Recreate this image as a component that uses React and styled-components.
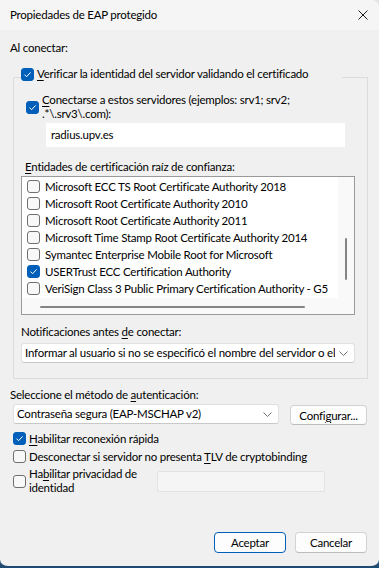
import React from 'react'
import styled, { createGlobalStyle } from 'styled-components'

const GlobalStyle = createGlobalStyle`
  html, body {
    margin: 0;
    padding: 0;
  }
  body {
    background: linear-gradient(#e4e4e4 50%, #1f4b73 50%);
    font-family: Lato, "Noto Sans", sans-serif;
    font-size: 11.5px;
    letter-spacing: -0.22px;
    color: #000;
  }
`

const Window = styled.div`
  width: 379px;
  height: 568px;
  box-sizing: border-box;
  background: #f0f0f0;
  border-radius: 0 8px 8px 8px;
  border-bottom: 2px solid #1f4b73;
  display: flex;
  flex-direction: column;
  overflow: hidden;
`

const TitleBar = styled.div`
  height: 30px;
  flex: none;
  display: flex;
  align-items: center;
  justify-content: space-between;
  padding: 0 11px 0 10px;
  background: #f5f5f5;
  line-height: 16px;
`

const Body = styled.div`
  display: flex;
  flex-direction: column;
  padding: 10px 11px 0 10px;
`

const Label = styled.div`
  line-height: 16px;
  margin-top: ${p => p.$mt || 0}px;
  margin-left: ${p => p.$ml || 0}px;
  white-space: nowrap;
`

const Group = styled.fieldset`
  margin: 10px 0 0 3px;
  padding: 0 12px 15px 7px;
  border: 1px solid #dcdcdc;
  min-width: 0;
  display: flex;
  flex-direction: column;
`

const Legend = styled.legend`
  padding: 0 0 6px 0;
  width: 321px;
  display: flex;
  align-items: center;
  gap: 3px;
  line-height: 16px;
  white-space: nowrap;
`

const CheckRow = styled.div`
  display: flex;
  align-items: center;
  gap: ${p => p.$gap ?? 3}px;
  margin-top: ${p => p.$mt || 0}px;
  margin-left: ${p => p.$ml || 0}px;
  min-height: ${p => p.$h || 18}px;
  white-space: nowrap;
`

const Lines = styled.div`
  line-height: 14px;
  width: ${p => (p.$w ? `${p.$w}px` : 'auto')};
`

const Box = styled.span`
  flex: none;
  width: 13px;
  height: 13px;
  box-sizing: border-box;
  border-radius: 3px;
  border: 1px solid ${p => (p.$checked ? '#005fb8' : '#6f6f6f')};
  background: ${p => (p.$checked ? '#005fb8' : '#f8f8f8')};
  display: flex;
  align-items: center;
  justify-content: center;
`

const TextInput = styled.div`
  margin: 2px 0 0 25px;
  width: 299px;
  height: 24px;
  box-sizing: border-box;
  background: #fff;
  padding-left: 5px;
  line-height: 24px;
`

const List = styled.div`
  margin-top: 1px;
  width: 334px;
  height: 139px;
  box-sizing: border-box;
  border: 1px solid #9a9a9a;
  display: grid;
  grid-template-columns: 1fr 16px;
  grid-template-rows: 1fr 16px;
`

const Items = styled.div`
  background: #fff;
  padding-top: 1px;
  overflow: hidden;
`

const Item = styled.div`
  height: 17px;
  display: flex;
  align-items: center;
  gap: 5px;
  padding-left: 5px;
  white-space: nowrap;
`

const VScroll = styled.div`
  background: #f9f9f9;
  padding: ${p => p.$top}px 0 0 7px;
  box-sizing: border-box;
`

const HScroll = styled.div`
  background: #f9f9f9;
  padding: 8px 0 0 ${p => p.$left}px;
  box-sizing: border-box;
`

const Corner = styled.div`
  background: #f9f9f9;
`

const Thumb = styled.div`
  background: #858585;
  border-radius: 1px;
`

const Select = styled.div`
  width: ${p => p.$w}px;
  height: 20px;
  box-sizing: border-box;
  margin-top: ${p => p.$mt || 0}px;
  background: #fff;
  border: 1px solid #e0e0e0;
  border-bottom-color: #c8c8c8;
  border-radius: 3px;
  display: flex;
  align-items: center;
  justify-content: space-between;
  gap: 4px;
  padding: 0 6px 0 3px;
  white-space: nowrap;
  overflow: hidden;
  line-height: 18px;
`

const SelectText = styled.span`
  overflow: hidden;
`

const AuthRow = styled.div`
  display: flex;
  align-items: flex-start;
  gap: 11px;
  margin: 1px 0 0 3px;
`

const Button = styled.div`
  width: ${p => p.$w}px;
  height: ${p => p.$h || 21}px;
  box-sizing: border-box;
  margin-top: ${p => p.$mt || 0}px;
  background: #fdfdfd;
  border: 1px solid ${p => (p.$primary ? '#005fb8' : '#d2d2d2')};
  border-bottom-color: ${p => (p.$primary ? '#005fb8' : '#bcbcbc')};
  border-radius: 4px;
  display: flex;
  align-items: center;
  justify-content: center;
  white-space: nowrap;
`

const Checks = styled.div`
  display: flex;
  flex-direction: column;
  margin: 4px 0 0 3px;
`

const DisabledInput = styled.div`
  width: 168px;
  height: 21px;
  box-sizing: border-box;
  background: #f5f5f5;
  border: 1px solid #e3e3e3;
  border-radius: 2px;
`

const Footer = styled.div`
  display: flex;
  justify-content: flex-end;
  gap: 9px;
  margin-top: 37px;
  padding-right: 1px;
`

const Key = styled.span`
  text-decoration: underline;
  text-underline-offset: 2px;
`

function Check({ checked }) {
  return (
    <Box $checked={checked}>
      {checked && (
        <svg width="9" height="9" viewBox="0 0 9 9">
          <path d="M1.5 4.6 L3.6 6.7 L7.6 2.4" fill="none" stroke="#fff" strokeWidth="1" />
        </svg>
      )}
    </Box>
  )
}

function Chevron() {
  return (
    <svg width="9" height="5" viewBox="0 0 9 5" style={{ flex: 'none' }}>
      <path d="M0.5 0.5 L4.5 4.5 L8.5 0.5" fill="none" stroke="#707070" strokeWidth="1" />
    </svg>
  )
}

const certs = [
  { name: 'Microsoft ECC TS Root Certificate Authority 2018' },
  { name: 'Microsoft Root Certificate Authority 2010' },
  { name: 'Microsoft Root Certificate Authority 2011' },
  { name: 'Microsoft Time Stamp Root Certificate Authority 2014' },
  { name: 'Symantec Enterprise Mobile Root for Microsoft' },
  { name: 'USERTrust ECC Certification Authority', checked: true },
  { name: 'VeriSign Class 3 Public Primary Certification Authority - G5' },
]

export default function App() {
  return (
    <>
      <GlobalStyle />
      <Window>
        <TitleBar>
          <span>Propiedades de EAP protegido</span>
          <svg width="10" height="10" viewBox="0 0 10 10">
            <path d="M0.5 0.5 L9.5 9.5 M9.5 0.5 L0.5 9.5" stroke="#1b1b1b" strokeWidth="1" />
          </svg>
        </TitleBar>
        <Body>
          <Label>Al conectar:</Label>
          <Group>
            <Legend>
              <Check checked />
              <span><Key>V</Key>erificar la identidad del servidor validando el certificado</span>
            </Legend>
            <CheckRow $mt={5} $ml={5} $h={28}>
              <Check checked />
              <Lines>
                <Key>C</Key>onectarse a estos servidores (ejemplos: srv1; srv2;
                <br />
                .*\.srv3\.com):
              </Lines>
            </CheckRow>
            <TextInput>radius.upv.es</TextInput>
            <Label $mt={12} $ml={4}>
              <Key>E</Key>ntidades de certificación raíz de confianza:
            </Label>
            <List>
              <Items>
                {certs.map(c => (
                  <Item key={c.name}>
                    <Check checked={c.checked} />
                    <span>{c.name}</span>
                  </Item>
                ))}
              </Items>
              <VScroll $top={61}>
                <Thumb style={{ width: 2, height: 42 }} />
              </VScroll>
              <HScroll $left={18}>
                <Thumb style={{ width: 265, height: 2 }} />
              </HScroll>
              <Corner />
            </List>
            <Label $mt={9}>
              Notificaciones antes <Key>d</Key>e conectar:
            </Label>
            <Select $w={334} $mt={3}>
              <SelectText>Informar al usuario si no se especificó el nombre del servidor o el</SelectText>
              <Chevron />
            </Select>
          </Group>
          <Label $mt={8}>
            Seleccione el método de <Key>a</Key>utenticación:
          </Label>
          <AuthRow>
            <Select $w={266}>
              <SelectText>Contraseña segura (EAP-MSCHAP v2)</SelectText>
              <Chevron />
            </Select>
            <Button $w={77} $h={20} $mt={1}>
              Confi<Key>g</Key>urar...
            </Button>
          </AuthRow>
          <Checks>
            <CheckRow>
              <Check checked />
              <span><Key>H</Key>abilitar reconexión rápida</span>
            </CheckRow>
            <CheckRow>
              <Check />
              <span>Desconectar si servidor no presenta <Key>T</Key>LV de cryptobinding</span>
            </CheckRow>
            <CheckRow $mt={2} $h={28}>
              <Check />
              <Lines $w={125}>
                Ha<Key>b</Key>ilitar privacidad de
                <br />
                identidad
              </Lines>
              <DisabledInput />
            </CheckRow>
          </Checks>
          <Footer>
            <Button $w={72} $primary>Aceptar</Button>
            <Button $w={72}>Cancelar</Button>
          </Footer>
        </Body>
      </Window>
    </>
  )
}
